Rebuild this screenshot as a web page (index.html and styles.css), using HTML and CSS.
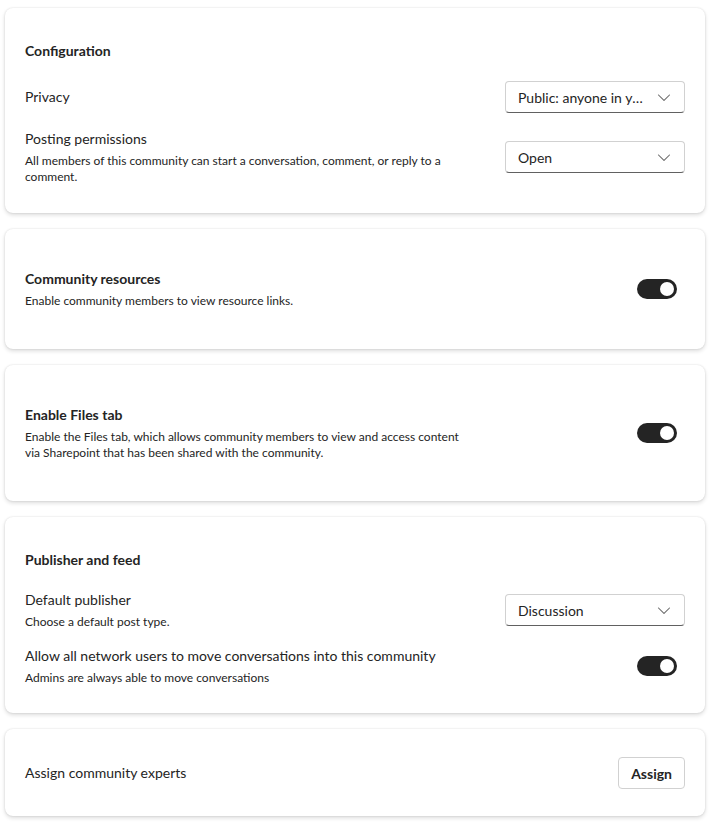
FILE: index.html
```html
<!DOCTYPE html>
<html lang="en">
<head>
    <meta charset="UTF-8">
    <title>Community settings</title>
    <link rel="stylesheet" href="styles.css">
</head>
<body>
<div class="settings">
    <section class="card card-config">
        <h2 class="card-title">Configuration</h2>
        <div class="rows">
            <div class="row">
                <div class="row-text"><div class="label">Privacy</div></div>
                <div class="dropdown">
                    <span class="dropdown-value">Public: anyone in your organization can join</span>
                    <svg class="chevron" viewBox="0 0 20 20"><path d="M15.85 7.65c.2.2.2.5 0 .7l-5.46 5.49a.55.55 0 0 1-.78 0L4.15 8.35a.5.5 0 1 1 .7-.7L10 12.8l5.15-5.16c.2-.2.5-.2.7 0Z"/></svg>
                </div>
            </div>
            <div class="row">
                <div class="row-text">
                    <div class="label">Posting permissions</div>
                    <div class="desc">All members of this community can start a conversation, comment, or reply to a comment.</div>
                </div>
                <div class="dropdown">
                    <span class="dropdown-value">Open</span>
                    <svg class="chevron" viewBox="0 0 20 20"><path d="M15.85 7.65c.2.2.2.5 0 .7l-5.46 5.49a.55.55 0 0 1-.78 0L4.15 8.35a.5.5 0 1 1 .7-.7L10 12.8l5.15-5.16c.2-.2.5-.2.7 0Z"/></svg>
                </div>
            </div>
        </div>
    </section>

    <section class="card card-toggle">
        <div class="row">
            <div class="row-text">
                <div class="label strong">Community resources</div>
                <div class="desc">Enable community members to view resource links.</div>
            </div>
            <span class="toggle"><span class="knob"></span></span>
        </div>
    </section>

    <section class="card card-toggle">
        <div class="row">
            <div class="row-text">
                <div class="label strong">Enable Files tab</div>
                <div class="desc">Enable the Files tab, which allows community members to view and access content via Sharepoint that has been shared with the community.</div>
            </div>
            <span class="toggle"><span class="knob"></span></span>
        </div>
    </section>

    <section class="card">
        <h2 class="card-title">Publisher and feed</h2>
        <div class="rows">
            <div class="row">
                <div class="row-text">
                    <div class="label">Default publisher</div>
                    <div class="desc">Choose a default post type.</div>
                </div>
                <div class="dropdown">
                    <span class="dropdown-value">Discussion</span>
                    <svg class="chevron" viewBox="0 0 20 20"><path d="M15.85 7.65c.2.2.2.5 0 .7l-5.46 5.49a.55.55 0 0 1-.78 0L4.15 8.35a.5.5 0 1 1 .7-.7L10 12.8l5.15-5.16c.2-.2.5-.2.7 0Z"/></svg>
                </div>
            </div>
            <div class="row">
                <div class="row-text">
                    <div class="label">Allow all network users to move conversations into this community</div>
                    <div class="desc">Admins are always able to move conversations</div>
                </div>
                <span class="toggle"><span class="knob"></span></span>
            </div>
        </div>
    </section>

    <section class="card card-action">
        <div class="row">
            <div class="label">Assign community experts</div>
            <button class="btn">Assign</button>
        </div>
    </section>
</div>
</body>
</html>
```

FILE: styles.css
```css
body { margin: 0; background: #fff; font-family: Lato, "Noto Sans", sans-serif; color: #242424; }
.settings { display: flex; flex-direction: column; gap: 16px; padding: 8px 8px 8px 5px; }
.card { background: #fff; border-radius: 8px; box-shadow: 0 0 2px rgba(0,0,0,0.12), 0 2px 4px rgba(0,0,0,0.14); padding: 33px 20px 27px; }
.card-config { padding-bottom: 28px; }
.card-title { margin: 0 0 20px; font-size: 14px; line-height: 20px; font-weight: 700; }
.rows { display: flex; flex-direction: column; gap: 16px; }
.row { display: flex; align-items: center; justify-content: space-between; gap: 20px; }
.row-text { max-width: 450px; }
.label { font-size: 14px; line-height: 20px; }
.label.strong { font-weight: 700; }
.desc { font-size: 12px; line-height: 16px; margin-top: 4px; }
.card-toggle { padding: 40px 20px; }
.card-action { padding: 28px 20px 27px; }

.dropdown { box-sizing: border-box; width: 180px; height: 32px; flex-shrink: 0; display: flex; align-items: center; padding: 0 10px 0 12px; border: 1px solid #d1d1d1; border-bottom-color: #616161; border-radius: 4px; font-size: 14px; }
.dropdown-value { flex: 1; min-width: 0; white-space: nowrap; overflow: hidden; text-overflow: ellipsis; }
.chevron { width: 20px; height: 20px; fill: #616161; flex-shrink: 0; margin-left: 6px; }

.toggle { box-sizing: border-box; width: 40px; height: 20px; flex-shrink: 0; margin-right: 8px; border-radius: 10px; background: #242424; display: flex; align-items: center; justify-content: flex-end; padding: 0 3px; }
.knob { width: 14px; height: 14px; border-radius: 50%; background: #fff; }

.btn { height: 32px; padding: 0 12px; background: #fff; border: 1px solid #d1d1d1; border-radius: 4px; font-family: inherit; font-size: 14px; font-weight: 700; color: #242424; }
```
